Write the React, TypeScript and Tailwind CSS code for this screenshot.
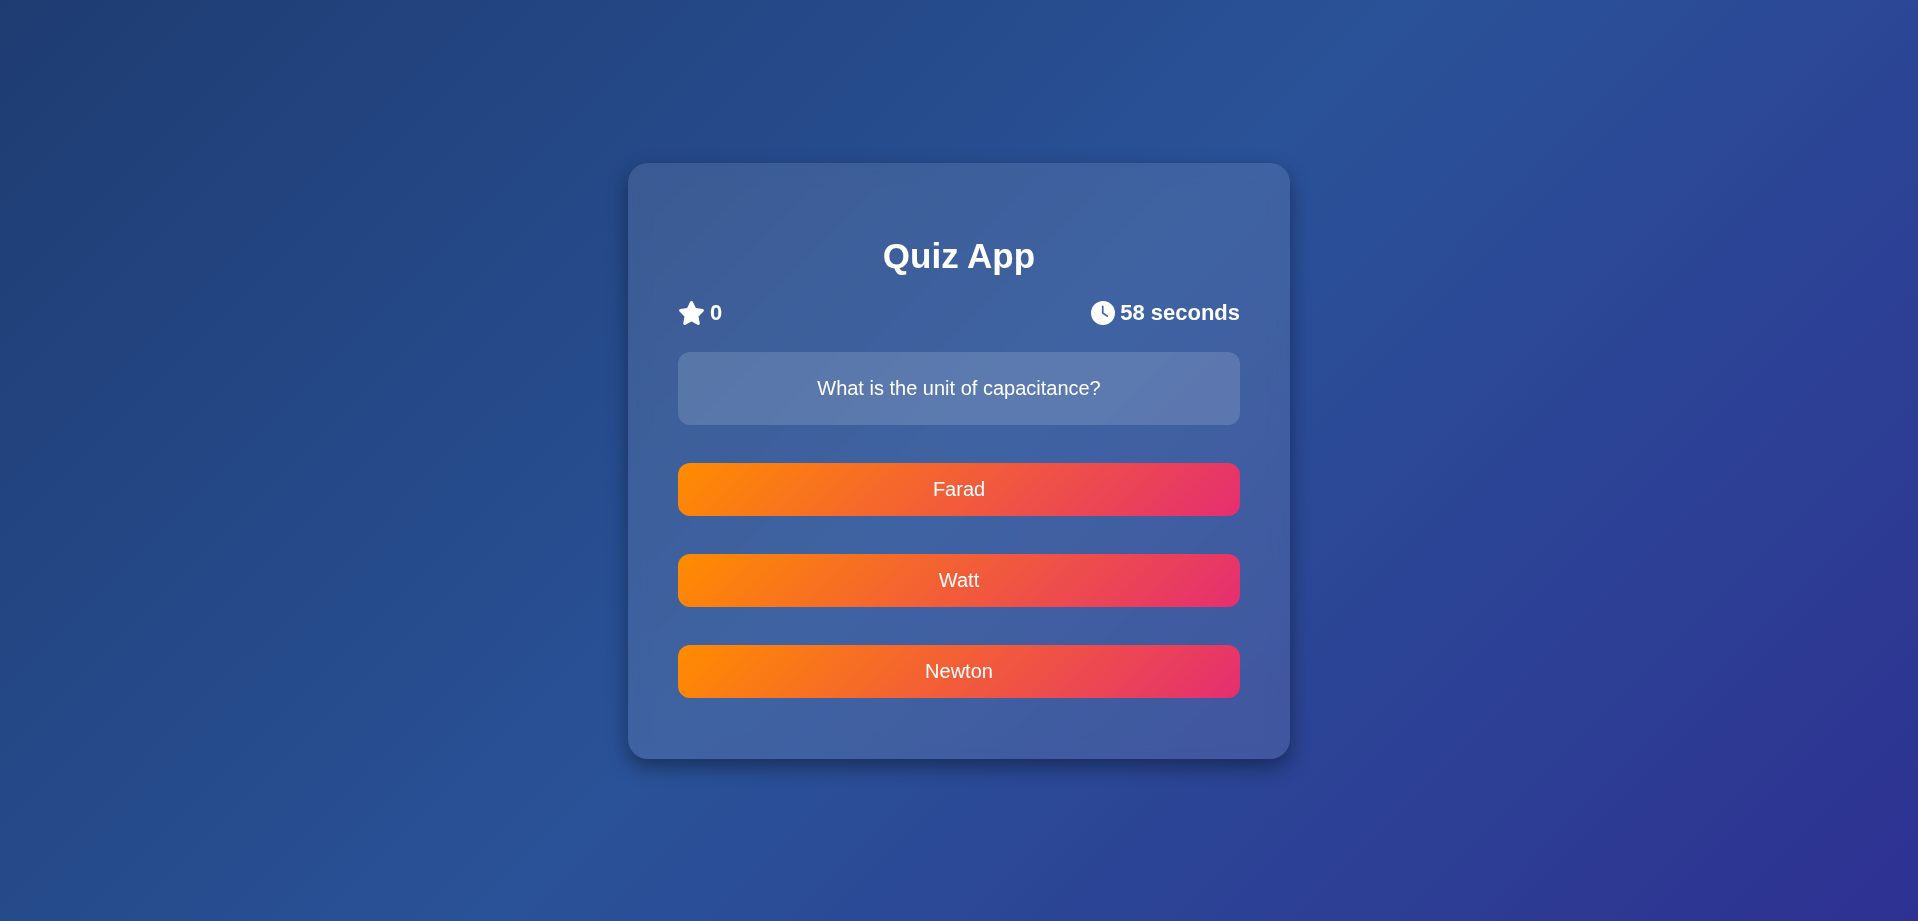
import { useState } from "react";
import { FaStar } from "react-icons/fa6";

const QUESTION = {
  text: "What is the unit of capacitance?",
  options: ["Farad", "Watt", "Newton"],
  answer: "Farad",
};

function ClockIcon() {
  return (
    <svg viewBox="0 0 512 512" className="size-6" role="img" aria-label="Time left">
      <circle cx="256" cy="256" r="256" fill="currentColor" />
      <path
        d="M250 112v144l98 66"
        className="fill-none stroke-[#4161a0]"
        strokeWidth="36"
        strokeLinecap="round"
        strokeLinejoin="round"
      />
    </svg>
  );
}

function Stats({ score, seconds }: { score: number; seconds: number }) {
  return (
    <div className="mt-6 flex items-center justify-between text-[22px] leading-[26px] font-bold">
      <div className="flex items-center gap-[5px]">
        <FaStar className="h-6 w-[27px]" aria-label="Score" />
        <span>{score}</span>
      </div>
      <div className="flex items-center gap-[5px]">
        <ClockIcon />
        <span>{seconds} seconds</span>
      </div>
    </div>
  );
}

export default function App() {
  const [score, setScore] = useState(0);

  return (
    <main className="flex min-h-screen items-center justify-center bg-[linear-gradient(135deg,#1e3c72,#2a5298,#2e3192)] font-['Liberation_Sans',Arial,sans-serif] text-white">
      <section className="w-full max-w-[662px] rounded-[20px] bg-white/10 px-[50px] pt-[73px] pb-[61px] shadow-[0_8px_20px_rgba(0,0,0,0.4)] backdrop-blur-[10px]">
        <h1 className="text-center text-[35px] leading-10 font-bold">Quiz App</h1>
        <Stats score={score} seconds={58} />
        <p className="mt-[26px] rounded-xl bg-white/15 p-[25px] text-center text-xl leading-[23px]">
          {QUESTION.text}
        </p>
        <div className="mt-[38px] flex flex-col gap-[38px]">
          {QUESTION.options.map((option) => (
            <button
              key={option}
              type="button"
              onClick={() => {
                if (option === QUESTION.answer) setScore(score + 1);
              }}
              className="w-full cursor-pointer rounded-xl bg-[linear-gradient(135deg,#ff8c00,#e52e71)] p-[15px] text-xl leading-[23px]"
            >
              {option}
            </button>
          ))}
        </div>
      </section>
    </main>
  );
}
